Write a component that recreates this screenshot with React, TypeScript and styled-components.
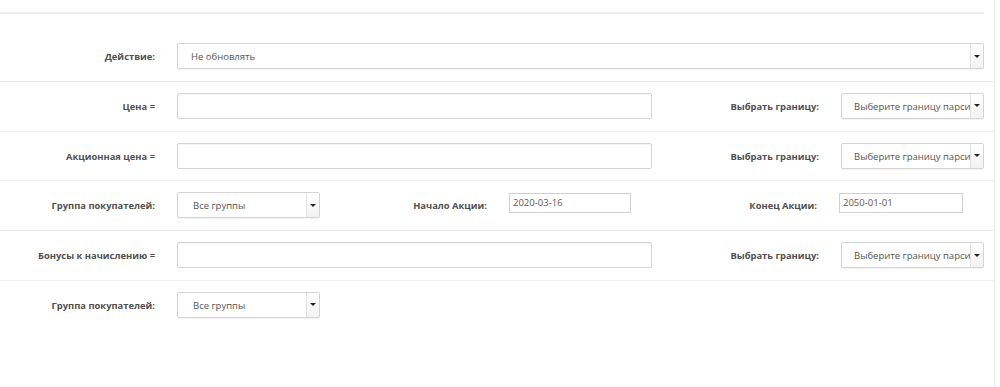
import React from 'react';
import styled, { createGlobalStyle } from 'styled-components';

const GlobalStyle = createGlobalStyle`
  html, body {
    margin: 0;
    padding: 0;
    background: #fff;
  }
  body {
    font-family: 'Open Sans', 'Liberation Sans', sans-serif;
    font-size: 9.5px;
    color: #555;
  }
`;

const Panel = styled.div`
  width: 995px;
  height: 387px;
  border-right: 1px solid #ebebeb;
  box-sizing: border-box;
  overflow: hidden;
`;

const PanelHeader = styled.div`
  width: 984px;
  height: 12px;
  border-bottom: 2px solid #efefef;
  margin-bottom: 18px;
`;

const Row = styled.div<{ $last?: boolean }>`
  display: flex;
  align-items: flex-start;
  padding: 11px 0 11.75px;
  border-bottom: ${(p) => (p.$last ? 'none' : '1px solid #ececec')};
`;

const Label = styled.label<{ $w: number }>`
  flex: 0 0 auto;
  width: ${(p) => p.$w}px;
  box-sizing: border-box;
  padding-right: 22px;
  height: 26px;
  line-height: 27px;
  text-align: right;
  font-weight: 700;
  font-size: 9.4px;
  color: #505050;
  white-space: nowrap;
`;

const TextInput = styled.div<{ $w: number }>`
  flex: 0 0 auto;
  width: ${(p) => p.$w}px;
  height: 26px;
  box-sizing: border-box;
  border: 1px solid #d4d4d4;
  border-radius: 2px;
  box-shadow: inset 0 1px 1px rgba(0, 0, 0, 0.04);
  background: #fff;
`;

const DateInput = styled.div<{ $w: number }>`
  flex: 0 0 auto;
  width: ${(p) => p.$w}px;
  height: 20px;
  margin-top: 1px;
  box-sizing: border-box;
  border: 1px solid #d0d0d0;
  padding: 0 3px;
  line-height: 17px;
  font-size: 9.5px;
  color: #5a5a5a;
  background: #fff;
`;

const Select = styled.div<{ $w: number }>`
  flex: 0 0 auto;
  display: flex;
  width: ${(p) => p.$w}px;
  height: 26px;
  box-sizing: border-box;
  border: 1px solid #d4d4d4;
  border-radius: 2px;
  background: #fff;
  box-shadow: 0 1px 1px rgba(0, 0, 0, 0.05);
  overflow: hidden;
`;

const SelectValue = styled.div<{ $pad: number }>`
  flex: 1 1 auto;
  min-width: 0;
  padding-left: ${(p) => p.$pad}px;
  padding-right: 2px;
  line-height: 25px;
  font-size: 9.5px;
  color: #555;
  white-space: nowrap;
  overflow: hidden;
`;

const Arrow = styled.div`
  flex: 0 0 12px;
  border-left: 1px solid #e2e2e2;
  background: linear-gradient(#fff, #f2f2f2);
  display: flex;
  align-items: center;
  justify-content: center;

  &::after {
    content: '';
    border-left: 3px solid transparent;
    border-right: 3px solid transparent;
    border-top: 3px solid #222;
  }
`;

const Dropdown: React.FC<{ w: number; pad?: number; value: string }> = ({ w, pad = 15, value }) => (
  <Select $w={w}>
    <SelectValue $pad={pad}>{value}</SelectValue>
    <Arrow />
  </Select>
);

const BoundaryPair: React.FC = () => (
  <>
    <Label $w={189}>Выбрать границу:</Label>
    <Dropdown w={143} pad={12} value="Выберите границу парсинга" />
  </>
);

const App: React.FC = () => {
  return (
    <>
      <GlobalStyle />
      <Panel>
        <PanelHeader />

        <Row>
          <Label $w={177}>Действие:</Label>
          <Dropdown w={807} pad={13} value="Не обновлять" />
        </Row>

        <Row>
          <Label $w={177}>Цена =</Label>
          <TextInput $w={475} />
          <BoundaryPair />
        </Row>

        <Row>
          <Label $w={177}>Акционная цена =</Label>
          <TextInput $w={475} />
          <BoundaryPair />
        </Row>

        <Row>
          <Label $w={177}>Группа покупателей:</Label>
          <Dropdown w={143} value="Все группы" />
          <Label $w={189}>Начало Акции:</Label>
          <DateInput $w={122}>2020-03-16</DateInput>
          <Label $w={208}>Конец Акции:</Label>
          <DateInput $w={124}>2050-01-01</DateInput>
        </Row>

        <Row>
          <Label $w={177}>Бонусы к начислению =</Label>
          <TextInput $w={475} />
          <BoundaryPair />
        </Row>

        <Row $last>
          <Label $w={177}>Группа покупателей:</Label>
          <Dropdown w={143} value="Все группы" />
        </Row>
      </Panel>
    </>
  );
};

export default App;
